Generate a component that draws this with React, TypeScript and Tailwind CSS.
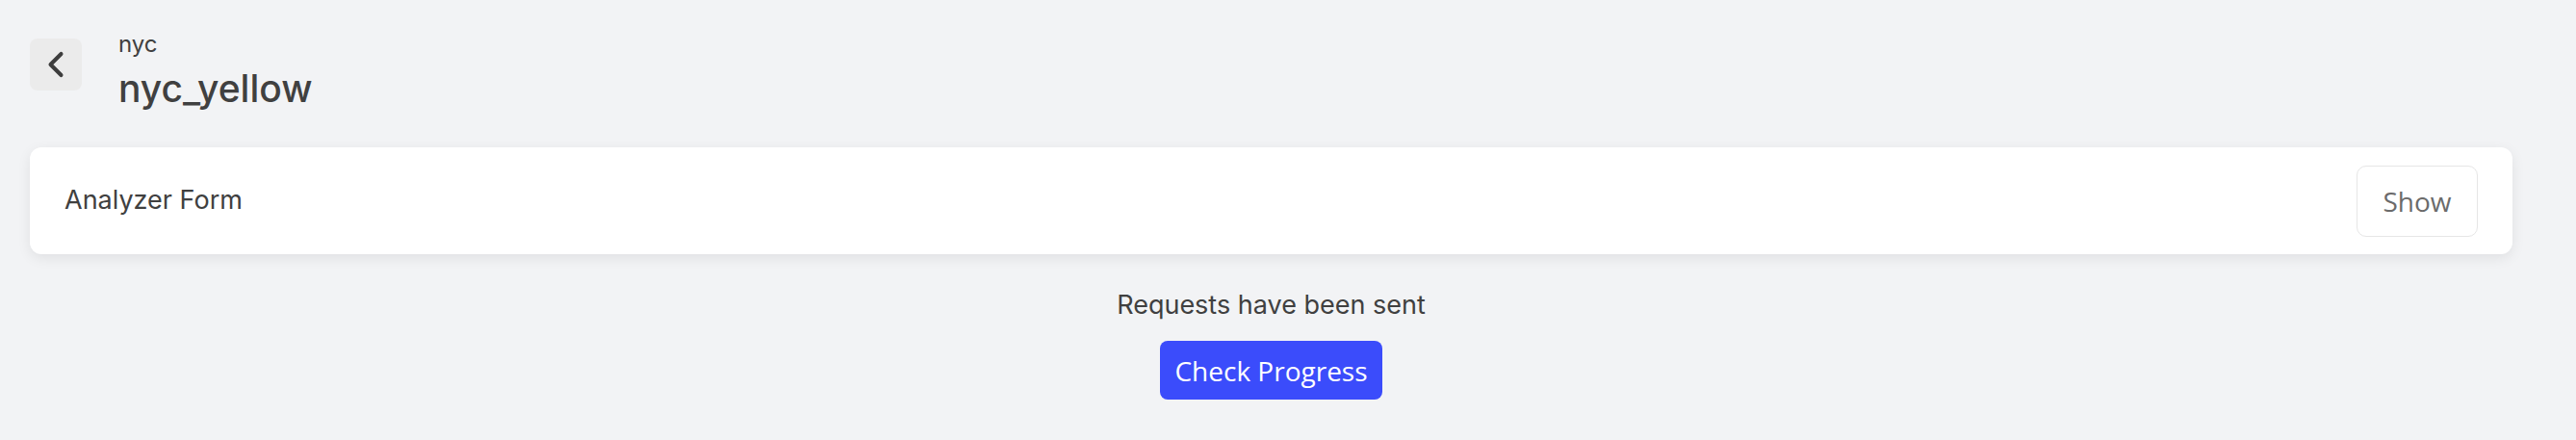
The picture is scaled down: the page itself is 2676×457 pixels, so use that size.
import { ChevronLeft } from "lucide-react";

const App = () => {
  return (
    <div className="min-h-screen bg-[#f2f3f5] pt-[40px] pl-[31px] pr-[66px] font-['Inter',sans-serif] text-[#404040]">
      {/* header */}
      <div className="flex h-[54px] items-start">
        <button className="flex h-[54px] w-[54px] items-center justify-center rounded-[8px] bg-[#ebebeb] text-[#3d3d3d]">
          <ChevronLeft size={44} strokeWidth={2.2} />
        </button>
        <div className="ml-[38px] -mt-[10px] flex flex-col">
          <span className="text-[24px] leading-[32px]">nyc</span>
          <span className="mt-[8px] text-[39px] font-medium leading-[44px]">nyc_yellow</span>
        </div>
      </div>

      {/* card */}
      <div className="mt-[59px] flex h-[111px] items-center justify-between rounded-[12px] bg-white pl-[36px] pr-[36px] shadow-[0_4px_14px_rgba(0,0,0,0.08)]">
        <span className="text-[27px]">Analyzer Form</span>
        <button className="h-[74px] w-[126px] rounded-[10px] border border-[#e6e6e6] font-['Open_Sans',sans-serif] text-[28px] text-[#6b6b6b]">
          Show
        </button>
      </div>

      {/* status */}
      <div className="mt-[36px] flex flex-col items-center">
        <span className="text-[27px] leading-[34px]">Requests have been sent</span>
        <button className="mt-[20px] h-[61px] w-[231px] rounded-[8px] bg-[#3b4cfb] font-['Open_Sans',sans-serif] text-[28px] text-white">
          Check Progress
        </button>
      </div>
    </div>
  );
};

export default App;
